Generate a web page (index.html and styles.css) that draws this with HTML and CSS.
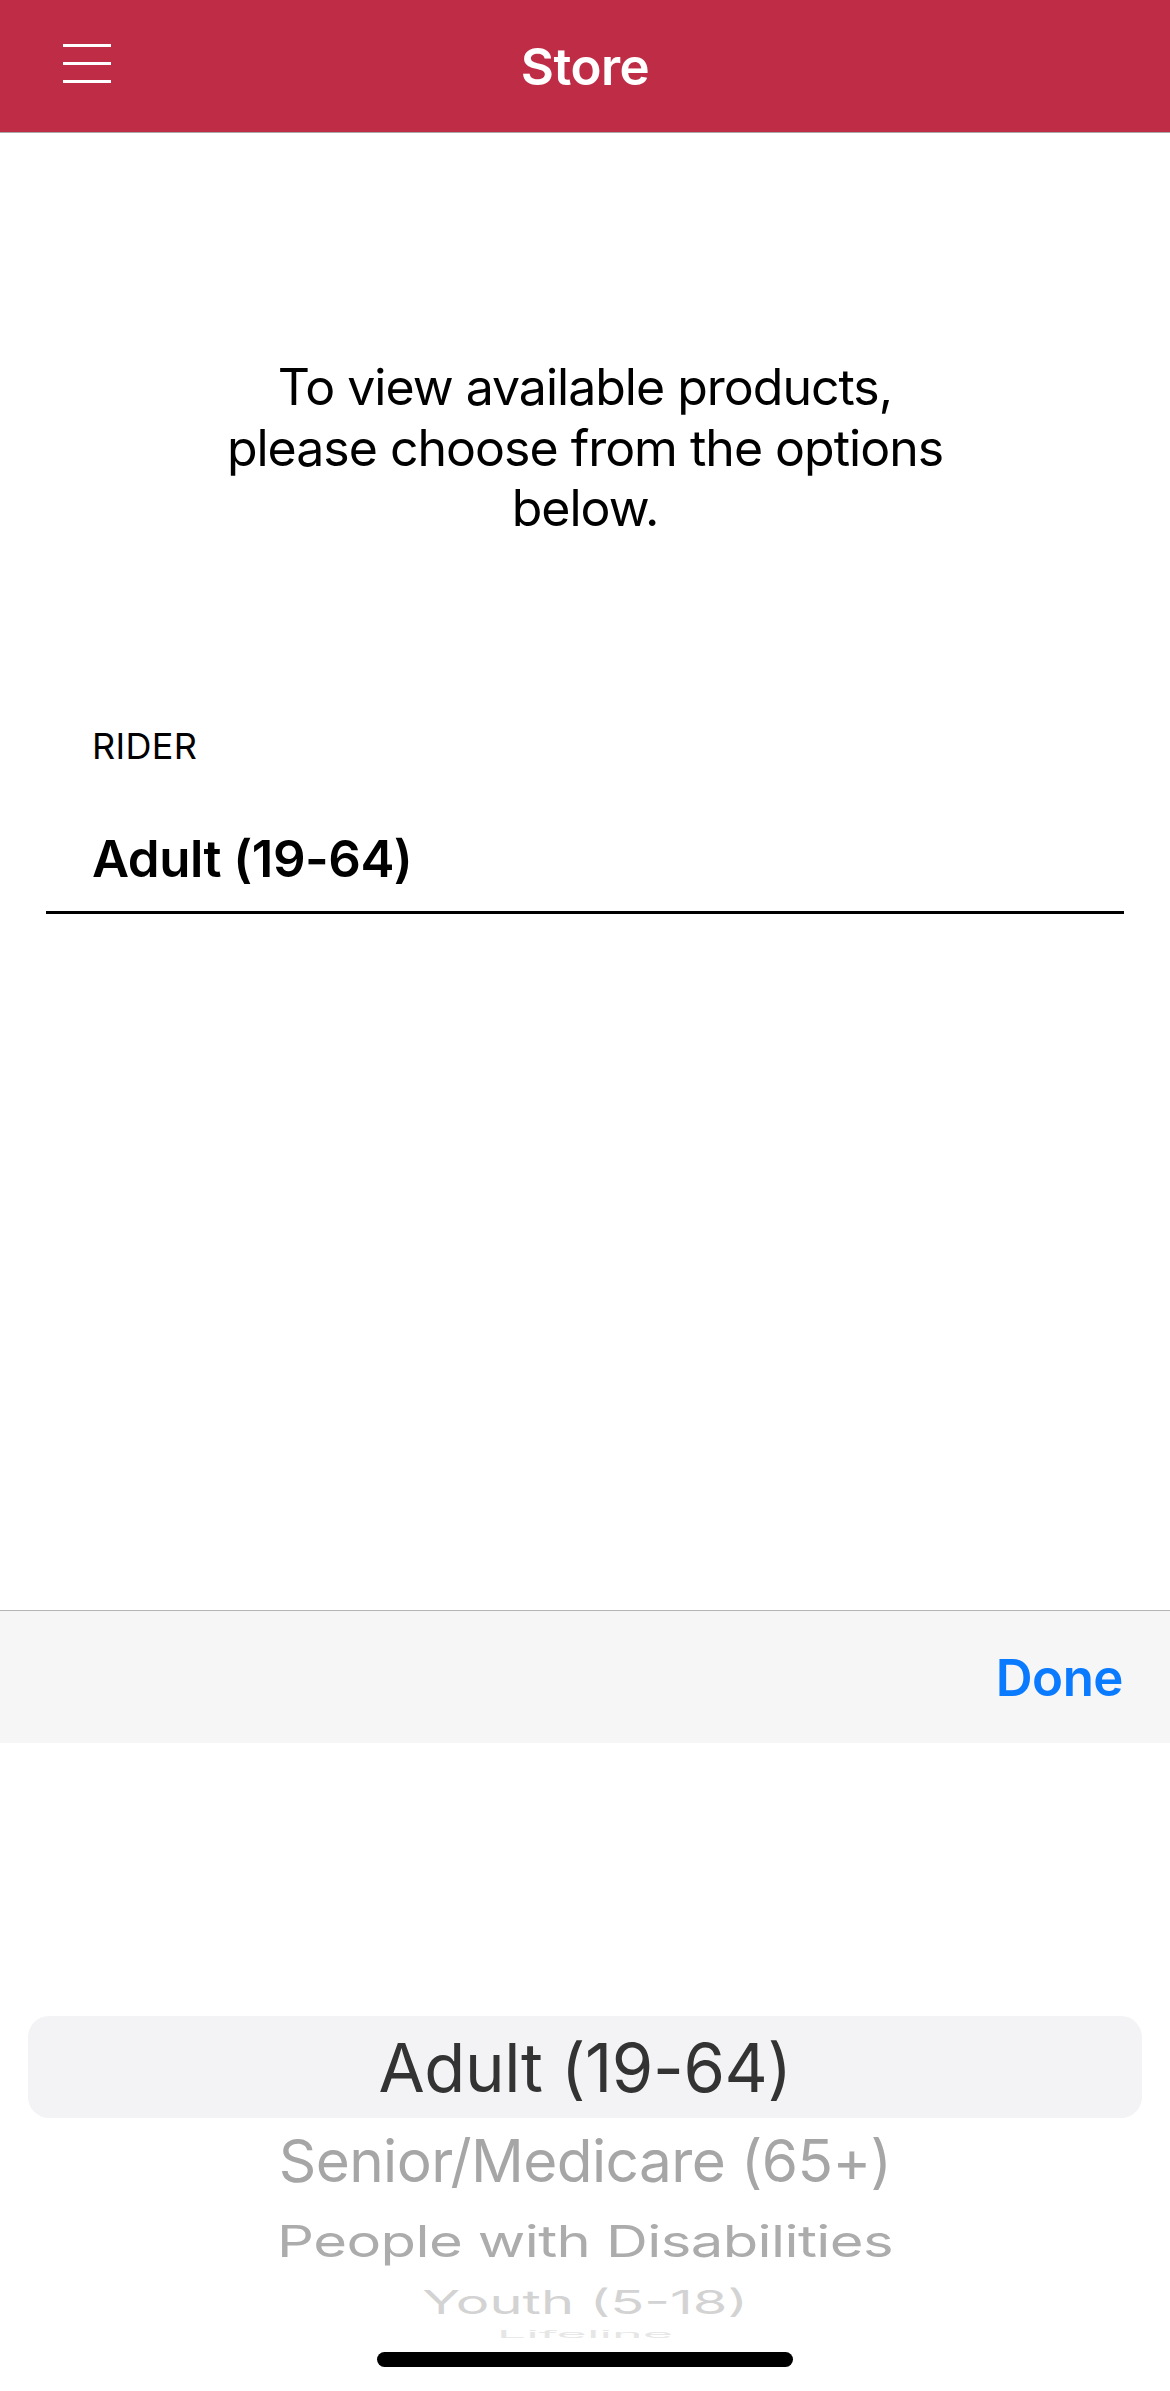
FILE: index.html
```html
<!DOCTYPE html>
<html lang="en">
<head>
    <meta charset="UTF-8">
    <meta name="viewport" content="width=device-width, initial-scale=1.0">
    <title>Store</title>
    <link rel="stylesheet" href="styles.css">
</head>
<body>
    <header class="navbar">
        <button class="menu-button" aria-label="Menu">
            <svg width="48" height="39" viewBox="0 0 48 39">
                <rect x="0" y="0" width="48" height="3" fill="#fff"/>
                <rect x="0" y="18" width="48" height="3" fill="#fff"/>
                <rect x="0" y="36" width="48" height="3" fill="#fff"/>
            </svg>
        </button>
        <h1 class="navbar-title">Store</h1>
        <div class="navbar-spacer"></div>
    </header>

    <main class="content">
        <p class="intro">To view available products,<br>please choose from the options<br>below.</p>

        <div class="field">
            <label class="field-label">RIDER</label>
            <div class="field-value">Adult (19-64)</div>
        </div>
    </main>

    <div class="toolbar">
        <button class="done-button">Done</button>
    </div>

    <div class="picker">
        <div class="picker-highlight"></div>
        <div class="picker-rows">
            <div class="picker-row row-0"><span>Adult (19-64)</span></div>
            <div class="picker-row row-1"><span>Senior/Medicare (65+)</span></div>
            <div class="picker-row row-2"><span>People with Disabilities</span></div>
            <div class="picker-row row-3"><span>Youth (5-18)</span></div>
            <div class="picker-row row-4"><span>Lifeline</span></div>
        </div>
        <div class="home-indicator"></div>
    </div>
</body>
</html>
```

FILE: styles.css
```css
html, body {
    height: 100%;
}
body {
    margin: 0;
    display: flex;
    flex-direction: column;
    font-family: Inter, "Liberation Sans", sans-serif;
    color: #000;
    background-color: #fff;
}

/* nav bar */
.navbar {
    height: 132px;
    flex-shrink: 0;
    display: grid;
    grid-template-columns: 1fr auto 1fr;
    align-items: center;
    background-color: #bf2c46;
    border-bottom: 1px solid #a9a9a9;
}
.menu-button {
    justify-self: start;
    margin: 0 0 5px 63px;
    padding: 0;
    border: none;
    background: none;
    line-height: 0;
}
.navbar-title {
    margin: 0;
    font-size: 51px;
    font-weight: 600;
    color: #fff;
    letter-spacing: -0.5px;
}

/* main */
.content {
    flex: 1;
    padding-top: 224px;
}
.intro {
    margin: 0;
    text-align: center;
    font-size: 50px;
    line-height: 60.5px;
    letter-spacing: -1px;
}
.field {
    margin: 186px 46px 0;
    border-bottom: 3px solid #000;
    padding: 0 0 22px 46px;
}
.field-label {
    display: block;
    font-size: 36px;
    line-height: 43px;
    letter-spacing: 0.3px;
}
.field-value {
    margin-top: 60px;
    font-size: 51px;
    line-height: 61px;
    font-weight: 600;
    letter-spacing: -0.5px;
}

/* keyboard toolbar */
.toolbar {
    height: 132px;
    flex-shrink: 0;
    display: flex;
    justify-content: flex-end;
    align-items: center;
    background-color: #f6f6f6;
    border-top: 1px solid #b4b4b4;
}
.done-button {
    margin-right: 47px;
    padding: 0;
    border: none;
    background: none;
    font-family: inherit;
    font-size: 51px;
    font-weight: 600;
    color: #0a7aff;
    letter-spacing: -0.5px;
}

/* wheel picker */
.picker {
    height: 648px;
    flex-shrink: 0;
    position: relative;
    overflow: hidden;
}
.picker-highlight {
    position: absolute;
    top: 273px;
    left: 28px;
    right: 28px;
    height: 102px;
    border-radius: 21px;
    background-color: #f3f3f5;
}
.picker-rows {
    position: relative;
    padding-top: 273px;
}
.picker-row {
    display: flex;
    justify-content: center;
    align-items: center;
    overflow: hidden;
}
.picker-row span {
    display: inline-block;
    white-space: nowrap;
}
.row-0 {
    height: 102px;
    font-size: 67px;
    color: #333;
    letter-spacing: -0.4px;
}
.row-1 {
    height: 84px;
    font-size: 58.5px;
    color: #a6a6a6;
    letter-spacing: -0.6px;
}
.row-1 span {
    transform: scaleY(1.0);
}
.row-2 {
    height: 78px;
    font-size: 58px;
    color: #acacac;
    letter-spacing: -0.6px;
}
.row-2 span {
    transform: scaleY(0.76);
}
.row-3 {
    height: 44px;
    font-size: 56px;
    color: #d3d3d3;
}
.row-3 span {
    transform: scaleY(0.58);
}
.row-4 {
    height: 20px;
    font-size: 52px;
    color: #e6e6e6;
}
.row-4 span {
    transform: scaleY(0.2);
}
.home-indicator {
    position: absolute;
    left: 377px;
    bottom: 24px;
    width: 416px;
    height: 15px;
    border-radius: 8px;
    background-color: #000;
}
```
